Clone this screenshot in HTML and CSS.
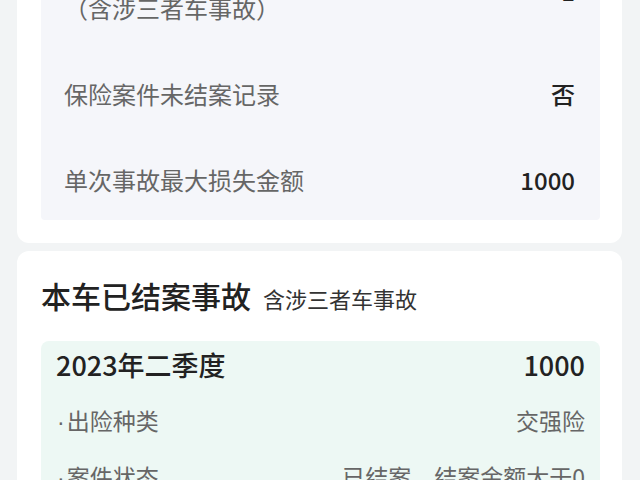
FILE: index.html
```html
<!DOCTYPE html>
<html>
<head>
    <meta charset="utf-8">
    <title>车辆出险记录</title>
    <link rel="stylesheet" href="styles.css">
</head>
<body>
    <div class="page">
        <div class="card card-top">
            <div class="info-panel">
                <div class="info-row">
                    <span class="info-label">近一年出险次数<br>（含涉三者车事故）</span>
                    <span class="info-value raised">1</span>
                </div>
                <div class="info-row">
                    <span class="info-label">保险案件未结案记录</span>
                    <span class="info-value">否</span>
                </div>
                <div class="info-row">
                    <span class="info-label">单次事故最大损失金额</span>
                    <span class="info-value">1000</span>
                </div>
            </div>
        </div>

        <div class="card">
            <h2 class="card-title">本车已结案事故<small>含涉三者车事故</small></h2>
            <div class="claim-panel">
                <div class="claim-head">
                    <span>2023年二季度</span>
                    <span>1000</span>
                </div>
                <div class="claim-row">
                    <span class="claim-label"><span class="dot">·</span>出险种类</span>
                    <span class="claim-value">交强险</span>
                </div>
                <div class="claim-row">
                    <span class="claim-label"><span class="dot">·</span>案件状态</span>
                    <span class="claim-value">已结案、结案金额大于0</span>
                </div>
            </div>
        </div>
    </div>
</body>
</html>
```

FILE: styles.css
```css
body {
    margin: 0;
    background-color: #f2f4f5;
    font-family: "Noto Sans CJK SC", "Noto Sans", sans-serif;
    color: #222;
}

.page {
    margin-top: -89px;
    padding: 0 18px 0 17px;
}

.card {
    background-color: #fff;
    border-radius: 12px;
    padding: 24px 22px 30px 24px;
    margin-bottom: 8px;
}

.card-top {
    padding-bottom: 23px;
}

/* grey info block */
.info-panel {
    background-color: #f5f6fa;
    border-radius: 4px;
    padding: 0 25px 0 23px;
}

.info-row {
    display: flex;
    justify-content: space-between;
    align-items: center;
    padding: 28px 0;
    font-size: 24px;
    line-height: 30px;
}

.info-row:last-child {
    padding-bottom: 25px;
}

.info-label {
    color: #666;
}

.info-value {
    color: #222;
    font-weight: 500;
}

.info-value.raised {
    margin-bottom: 5px;
}

.card-title {
    margin: 0 0 23px;
    font-size: 30px;
    line-height: 40px;
    font-weight: 500;
    color: #222;
}

.card-title small {
    margin-left: 12px;
    font-size: 22px;
    font-weight: 400;
    color: #333;
}

/* green claim block */
.claim-panel {
    background-color: #edf8f4;
    border-radius: 8px;
    padding: 8px 15px 20px;
}

.claim-head {
    display: flex;
    justify-content: space-between;
    font-size: 27px;
    line-height: 32px;
    font-weight: 500;
    color: #222;
}

.claim-row {
    display: flex;
    justify-content: space-between;
    margin-top: 23px;
    font-size: 23px;
    line-height: 32px;
    color: #666;
}

.claim-row + .claim-row {
    margin-top: 22px;
}

.dot {
    font-family: "Liberation Sans", sans-serif;
    margin: 0 2px 0 1px;
}
```
